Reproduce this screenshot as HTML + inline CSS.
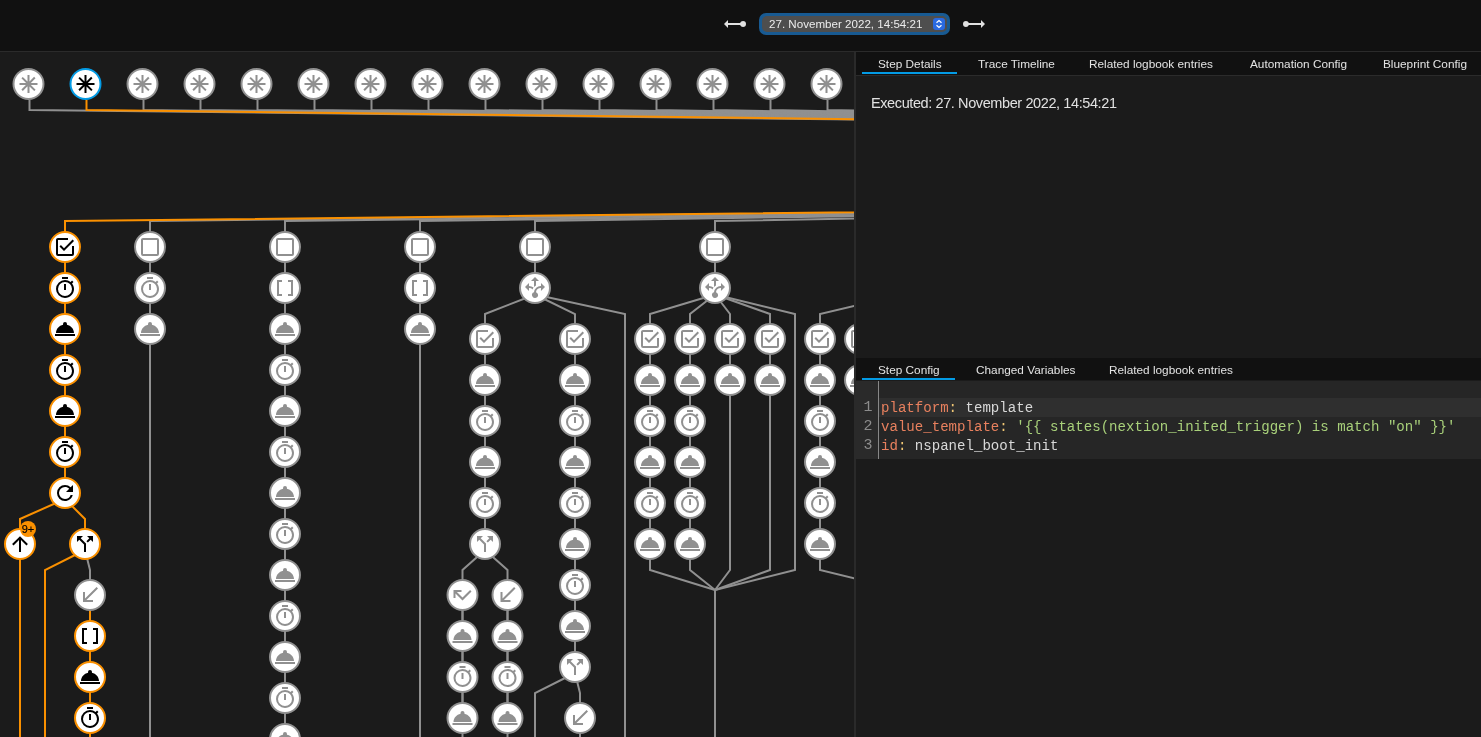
<!DOCTYPE html>
<html><head><meta charset="utf-8"><style>
html,body{margin:0;padding:0;}
.hdr,.panel,.graph{will-change:transform;}
body{width:1481px;height:737px;overflow:hidden;background:#1b1b1b;position:relative;font-family:"Liberation Sans",sans-serif;}
.hdr{position:absolute;left:0;top:0;width:1481px;height:51px;background:#111111;border-bottom:1px solid #2b2b2b;}
.graph{position:absolute;left:0;top:0;width:855px;height:737px;overflow:hidden;}
.graph svg path{fill:none;stroke-width:2;}
.graph svg path.i{stroke:none;}
.graph svg circle{fill:#fff;stroke-width:2;}
.panel{position:absolute;left:854px;top:52px;width:625px;height:685px;border-left:2px solid #2a2a2a;background:#1b1b1b;}
.tabs{position:absolute;left:0;width:626px;background:#111111;}
.tab{position:absolute;color:#e3e3e3;font-size:11.8px;letter-spacing:0px;white-space:nowrap;}
.ul{position:absolute;height:2px;background:#039be5;}
.exec{position:absolute;left:15px;top:43px;color:#e1e1e1;font-size:14.5px;letter-spacing:-0.4px;white-space:nowrap;}
.editor{position:absolute;left:0;top:329px;width:626px;height:78px;background:#262626;}
.gutter{position:absolute;left:0;top:0;width:22px;height:78px;background:#2a2a2a;border-right:1px solid #888;}
.code{position:absolute;font-family:"Liberation Mono",monospace;font-size:14.08px;line-height:19px;white-space:pre;}
.ln{position:absolute;left:0;width:16.5px;text-align:right;color:#8c8c8c;font-family:"Liberation Mono",monospace;font-size:15px;line-height:19px;}
.k{color:#e8805e} .p{color:#f0c674} .v{color:#d8d8d8} .s{color:#a8d07a}
</style></head><body>
<div class="graph"><svg width="855" height="737">
<path d="M29.5 100 L29.5 110 L1767 130" stroke="#909090"/>
<path d="M143.5 100 L143.5 110 L1767 130" stroke="#909090"/>
<path d="M200.5 100 L200.5 110 L1767 130" stroke="#909090"/>
<path d="M257.5 100 L257.5 110 L1767 130" stroke="#909090"/>
<path d="M314.5 100 L314.5 110 L1767 130" stroke="#909090"/>
<path d="M371.5 100 L371.5 110 L1767 130" stroke="#909090"/>
<path d="M428.5 100 L428.5 110 L1767 130" stroke="#909090"/>
<path d="M485.5 100 L485.5 110 L1767 130" stroke="#909090"/>
<path d="M542.5 100 L542.5 110 L1767 130" stroke="#909090"/>
<path d="M599.5 100 L599.5 110 L1767 130" stroke="#909090"/>
<path d="M656.5 100 L656.5 110 L1767 130" stroke="#909090"/>
<path d="M713.5 100 L713.5 110 L1767 130" stroke="#909090"/>
<path d="M770.5 100 L770.5 110 L1767 130" stroke="#909090"/>
<path d="M827.5 100 L827.5 110 L1767 130" stroke="#909090"/>
<path d="M884.5 100 L884.5 110 L1767 130" stroke="#909090"/>
<path d="M941.5 100 L941.5 110 L1767 130" stroke="#909090"/>
<path d="M1867 201 L150 221 L150 235" stroke="#909090"/>
<path d="M1867 201 L285 221 L285 235" stroke="#909090"/>
<path d="M1867 201 L420 221 L420 235" stroke="#909090"/>
<path d="M1867 201 L535 221 L535 235" stroke="#909090"/>
<path d="M1867 201 L715 221 L715 235" stroke="#909090"/>
<path d="M1867 201 L903 221 L903 235" stroke="#909090"/>
<path d="M85 550 L90 570 L90 595" stroke="#909090"/>
<path d="M150 247 L150 329" stroke="#909090"/>
<path d="M150 329 L150 800" stroke="#909090"/>
<path d="M285 247 L285 739" stroke="#909090"/>
<path d="M285 739 L285 800" stroke="#909090"/>
<path d="M420 247 L420 329" stroke="#909090"/>
<path d="M420 329 L420 800" stroke="#909090"/>
<path d="M535 247 L535 288" stroke="#909090"/>
<path d="M535 294.5 L485 314 L485 330" stroke="#909090"/>
<path d="M535 294.5 L575 314 L575 330" stroke="#909090"/>
<path d="M535 294.5 L625 314 L625 330" stroke="#909090"/>
<path d="M625 314 L625 800" stroke="#909090"/>
<path d="M485 339 L485 544" stroke="#909090"/>
<path d="M485 550 L462.5 570 L462.5 800" stroke="#909090"/>
<path d="M485 550 L507.5 570 L507.5 800" stroke="#909090"/>
<path d="M462.5 595 L462.5 718" stroke="#909090"/>
<path d="M507.5 595 L507.5 718" stroke="#909090"/>
<path d="M575 339 L575 667" stroke="#909090"/>
<path d="M575 673 L535 693 L535 800" stroke="#909090"/>
<path d="M575 673 L580 693 L580 800" stroke="#909090"/>
<path d="M715 247 L715 288" stroke="#909090"/>
<path d="M715 294.5 L650 314 L650 570 L715 590" stroke="#909090"/>
<path d="M715 294.5 L690 314 L690 570 L715 590" stroke="#909090"/>
<path d="M715 294.5 L730 314 L730 570 L715 590" stroke="#909090"/>
<path d="M715 294.5 L770 314 L770 570 L715 590" stroke="#909090"/>
<path d="M715 294.5 L795 314 L795 570 L715 590" stroke="#909090"/>
<path d="M715 590 L715 800" stroke="#909090"/>
<path d="M650 339 L650 544" stroke="#909090"/>
<path d="M690 339 L690 544" stroke="#909090"/>
<path d="M730 339 L730 380" stroke="#909090"/>
<path d="M770 339 L770 380" stroke="#909090"/>
<path d="M903 247 L903 288" stroke="#909090"/>
<path d="M903 294.5 L820 314 L820 570 L903 590" stroke="#909090"/>
<path d="M903 294.5 L860 314 L860 570 L903 590" stroke="#909090"/>
<path d="M820 339 L820 544" stroke="#909090"/>
<path d="M860 339 L860 380" stroke="#909090"/>
<path d="M86.5 100 L86.5 110 L1767 130" stroke="#fa9000"/>
<path d="M1867 201 L65 221 L65 235" stroke="#fa9000"/>
<path d="M65 247 L65 493" stroke="#fa9000"/>
<path d="M65 499 L20 519 L20 800" stroke="#fa9000"/>
<path d="M65 499 L85 519 L85 544" stroke="#fa9000"/>
<path d="M85 550 L45 570 L45 800" stroke="#fa9000"/>
<path d="M90 595 L90 800" stroke="#fa9000"/>
<circle cx="28.5" cy="84" r="15" stroke="#909090"/><path class="i" d="M21 13h-6.6l4.7 4.7-1.4 1.4-4.7-4.7V21h-2v-6.7L6.3 19l-1.4-1.4L9.4 13H3v-2h6.6L4.9 6.3l1.4-1.4L11 9.6V3h2v6.4l4.6-4.6L19 6.3 14.3 11H21z" style="fill:#909090" transform="translate(16.5 72)"/>
<circle cx="85.5" cy="84" r="15" stroke="#039be5"/><path class="i" d="M21 13h-6.6l4.7 4.7-1.4 1.4-4.7-4.7V21h-2v-6.7L6.3 19l-1.4-1.4L9.4 13H3v-2h6.6L4.9 6.3l1.4-1.4L11 9.6V3h2v6.4l4.6-4.6L19 6.3 14.3 11H21z" style="fill:#000" transform="translate(73.5 72)"/>
<circle cx="142.5" cy="84" r="15" stroke="#909090"/><path class="i" d="M21 13h-6.6l4.7 4.7-1.4 1.4-4.7-4.7V21h-2v-6.7L6.3 19l-1.4-1.4L9.4 13H3v-2h6.6L4.9 6.3l1.4-1.4L11 9.6V3h2v6.4l4.6-4.6L19 6.3 14.3 11H21z" style="fill:#909090" transform="translate(130.5 72)"/>
<circle cx="199.5" cy="84" r="15" stroke="#909090"/><path class="i" d="M21 13h-6.6l4.7 4.7-1.4 1.4-4.7-4.7V21h-2v-6.7L6.3 19l-1.4-1.4L9.4 13H3v-2h6.6L4.9 6.3l1.4-1.4L11 9.6V3h2v6.4l4.6-4.6L19 6.3 14.3 11H21z" style="fill:#909090" transform="translate(187.5 72)"/>
<circle cx="256.5" cy="84" r="15" stroke="#909090"/><path class="i" d="M21 13h-6.6l4.7 4.7-1.4 1.4-4.7-4.7V21h-2v-6.7L6.3 19l-1.4-1.4L9.4 13H3v-2h6.6L4.9 6.3l1.4-1.4L11 9.6V3h2v6.4l4.6-4.6L19 6.3 14.3 11H21z" style="fill:#909090" transform="translate(244.5 72)"/>
<circle cx="313.5" cy="84" r="15" stroke="#909090"/><path class="i" d="M21 13h-6.6l4.7 4.7-1.4 1.4-4.7-4.7V21h-2v-6.7L6.3 19l-1.4-1.4L9.4 13H3v-2h6.6L4.9 6.3l1.4-1.4L11 9.6V3h2v6.4l4.6-4.6L19 6.3 14.3 11H21z" style="fill:#909090" transform="translate(301.5 72)"/>
<circle cx="370.5" cy="84" r="15" stroke="#909090"/><path class="i" d="M21 13h-6.6l4.7 4.7-1.4 1.4-4.7-4.7V21h-2v-6.7L6.3 19l-1.4-1.4L9.4 13H3v-2h6.6L4.9 6.3l1.4-1.4L11 9.6V3h2v6.4l4.6-4.6L19 6.3 14.3 11H21z" style="fill:#909090" transform="translate(358.5 72)"/>
<circle cx="427.5" cy="84" r="15" stroke="#909090"/><path class="i" d="M21 13h-6.6l4.7 4.7-1.4 1.4-4.7-4.7V21h-2v-6.7L6.3 19l-1.4-1.4L9.4 13H3v-2h6.6L4.9 6.3l1.4-1.4L11 9.6V3h2v6.4l4.6-4.6L19 6.3 14.3 11H21z" style="fill:#909090" transform="translate(415.5 72)"/>
<circle cx="484.5" cy="84" r="15" stroke="#909090"/><path class="i" d="M21 13h-6.6l4.7 4.7-1.4 1.4-4.7-4.7V21h-2v-6.7L6.3 19l-1.4-1.4L9.4 13H3v-2h6.6L4.9 6.3l1.4-1.4L11 9.6V3h2v6.4l4.6-4.6L19 6.3 14.3 11H21z" style="fill:#909090" transform="translate(472.5 72)"/>
<circle cx="541.5" cy="84" r="15" stroke="#909090"/><path class="i" d="M21 13h-6.6l4.7 4.7-1.4 1.4-4.7-4.7V21h-2v-6.7L6.3 19l-1.4-1.4L9.4 13H3v-2h6.6L4.9 6.3l1.4-1.4L11 9.6V3h2v6.4l4.6-4.6L19 6.3 14.3 11H21z" style="fill:#909090" transform="translate(529.5 72)"/>
<circle cx="598.5" cy="84" r="15" stroke="#909090"/><path class="i" d="M21 13h-6.6l4.7 4.7-1.4 1.4-4.7-4.7V21h-2v-6.7L6.3 19l-1.4-1.4L9.4 13H3v-2h6.6L4.9 6.3l1.4-1.4L11 9.6V3h2v6.4l4.6-4.6L19 6.3 14.3 11H21z" style="fill:#909090" transform="translate(586.5 72)"/>
<circle cx="655.5" cy="84" r="15" stroke="#909090"/><path class="i" d="M21 13h-6.6l4.7 4.7-1.4 1.4-4.7-4.7V21h-2v-6.7L6.3 19l-1.4-1.4L9.4 13H3v-2h6.6L4.9 6.3l1.4-1.4L11 9.6V3h2v6.4l4.6-4.6L19 6.3 14.3 11H21z" style="fill:#909090" transform="translate(643.5 72)"/>
<circle cx="712.5" cy="84" r="15" stroke="#909090"/><path class="i" d="M21 13h-6.6l4.7 4.7-1.4 1.4-4.7-4.7V21h-2v-6.7L6.3 19l-1.4-1.4L9.4 13H3v-2h6.6L4.9 6.3l1.4-1.4L11 9.6V3h2v6.4l4.6-4.6L19 6.3 14.3 11H21z" style="fill:#909090" transform="translate(700.5 72)"/>
<circle cx="769.5" cy="84" r="15" stroke="#909090"/><path class="i" d="M21 13h-6.6l4.7 4.7-1.4 1.4-4.7-4.7V21h-2v-6.7L6.3 19l-1.4-1.4L9.4 13H3v-2h6.6L4.9 6.3l1.4-1.4L11 9.6V3h2v6.4l4.6-4.6L19 6.3 14.3 11H21z" style="fill:#909090" transform="translate(757.5 72)"/>
<circle cx="826.5" cy="84" r="15" stroke="#909090"/><path class="i" d="M21 13h-6.6l4.7 4.7-1.4 1.4-4.7-4.7V21h-2v-6.7L6.3 19l-1.4-1.4L9.4 13H3v-2h6.6L4.9 6.3l1.4-1.4L11 9.6V3h2v6.4l4.6-4.6L19 6.3 14.3 11H21z" style="fill:#909090" transform="translate(814.5 72)"/>
<circle cx="883.5" cy="84" r="15" stroke="#909090"/><path class="i" d="M21 13h-6.6l4.7 4.7-1.4 1.4-4.7-4.7V21h-2v-6.7L6.3 19l-1.4-1.4L9.4 13H3v-2h6.6L4.9 6.3l1.4-1.4L11 9.6V3h2v6.4l4.6-4.6L19 6.3 14.3 11H21z" style="fill:#909090" transform="translate(871.5 72)"/>
<circle cx="940.5" cy="84" r="15" stroke="#909090"/><path class="i" d="M21 13h-6.6l4.7 4.7-1.4 1.4-4.7-4.7V21h-2v-6.7L6.3 19l-1.4-1.4L9.4 13H3v-2h6.6L4.9 6.3l1.4-1.4L11 9.6V3h2v6.4l4.6-4.6L19 6.3 14.3 11H21z" style="fill:#909090" transform="translate(928.5 72)"/>
<circle cx="65" cy="247" r="15" stroke="#fa9000"/><path class="i" d="M19 19H5V5h10V3H5c-1.11 0-2 .89-2 2v14a2 2 0 0 0 2 2h14a2 2 0 0 0 2-2v-8h-2m-11.09-.92L6.5 11.5 11 16 21 6l-1.41-1.42L11 13.17z" style="fill:#000" transform="translate(53 235)"/>
<circle cx="65" cy="288" r="15" stroke="#fa9000"/><path class="i" d="M12 20a7 7 0 0 1-7-7 7 7 0 0 1 7-7 7 7 0 0 1 7 7 7 7 0 0 1-7 7m7.03-12.61 1.42-1.42c-.45-.51-.9-.97-1.41-1.41L17.62 6c-1.55-1.26-3.5-2-5.62-2a9 9 0 0 0-9 9 9 9 0 0 0 9 9c5 0 9-4.03 9-9 0-2.12-.74-4.07-1.97-5.61M11 14h2V8h-2m4-7H9v2h6z" style="fill:#000" transform="translate(53 276)"/>
<circle cx="65" cy="329" r="15" stroke="#fa9000"/><path class="i" d="M12 5a2 2 0 0 1 2 2q0 .36-.12.69C17.95 8.5 21 11.91 21 16H3c0-4.09 3.05-7.5 7.12-8.31Q10 7.36 10 7a2 2 0 0 1 2-2m10 14H2v-2h20z" style="fill:#000" transform="translate(53 317)"/>
<circle cx="65" cy="370" r="15" stroke="#fa9000"/><path class="i" d="M12 20a7 7 0 0 1-7-7 7 7 0 0 1 7-7 7 7 0 0 1 7 7 7 7 0 0 1-7 7m7.03-12.61 1.42-1.42c-.45-.51-.9-.97-1.41-1.41L17.62 6c-1.55-1.26-3.5-2-5.62-2a9 9 0 0 0-9 9 9 9 0 0 0 9 9c5 0 9-4.03 9-9 0-2.12-.74-4.07-1.97-5.61M11 14h2V8h-2m4-7H9v2h6z" style="fill:#000" transform="translate(53 358)"/>
<circle cx="65" cy="411" r="15" stroke="#fa9000"/><path class="i" d="M12 5a2 2 0 0 1 2 2q0 .36-.12.69C17.95 8.5 21 11.91 21 16H3c0-4.09 3.05-7.5 7.12-8.31Q10 7.36 10 7a2 2 0 0 1 2-2m10 14H2v-2h20z" style="fill:#000" transform="translate(53 399)"/>
<circle cx="65" cy="452" r="15" stroke="#fa9000"/><path class="i" d="M12 20a7 7 0 0 1-7-7 7 7 0 0 1 7-7 7 7 0 0 1 7 7 7 7 0 0 1-7 7m7.03-12.61 1.42-1.42c-.45-.51-.9-.97-1.41-1.41L17.62 6c-1.55-1.26-3.5-2-5.62-2a9 9 0 0 0-9 9 9 9 0 0 0 9 9c5 0 9-4.03 9-9 0-2.12-.74-4.07-1.97-5.61M11 14h2V8h-2m4-7H9v2h6z" style="fill:#000" transform="translate(53 440)"/>
<circle cx="65" cy="493" r="15" stroke="#fa9000"/><path class="i" d="M17.65 6.35A7.96 7.96 0 0 0 12 4a8 8 0 0 0-8 8 8 8 0 0 0 8 8c3.73 0 6.84-2.55 7.73-6h-2.08A5.99 5.99 0 0 1 12 18a6 6 0 0 1-6-6 6 6 0 0 1 6-6c1.66 0 3.14.69 4.22 1.78L13 11h7V4z" style="fill:#000" transform="translate(53 481)"/>
<circle cx="20" cy="544" r="15" stroke="#fa9000"/><path class="i" d="M13 20h-2V8l-5.5 5.5-1.42-1.42L12 4.16l7.92 7.92-1.42 1.42L13 8z" style="fill:#000" transform="translate(8 532)"/>
<circle cx="85" cy="544" r="15" stroke="#fa9000"/><path class="i" d="m14 4 2.29 2.29-2.88 2.88 1.42 1.42 2.88-2.88L20 10V4M10 4H4v6l2.29-2.29 4.71 4.7V20h2v-8.41l-5.29-5.3" style="fill:#000" transform="translate(73 532)"/>
<circle cx="90" cy="595" r="15" stroke="#909090"/><path class="i" d="M20 5.41 18.59 4 7 15.59V9H5v10h10v-2H8.41" style="fill:#909090" transform="translate(78 583)"/>
<circle cx="90" cy="636" r="15" stroke="#fa9000"/><path class="i" d="M15 4v2h3v12h-3v2h5V4M4 4v16h5v-2H6V6h3V4z" style="fill:#000" transform="translate(78 624)"/>
<circle cx="90" cy="677" r="15" stroke="#fa9000"/><path class="i" d="M12 5a2 2 0 0 1 2 2q0 .36-.12.69C17.95 8.5 21 11.91 21 16H3c0-4.09 3.05-7.5 7.12-8.31Q10 7.36 10 7a2 2 0 0 1 2-2m10 14H2v-2h20z" style="fill:#000" transform="translate(78 665)"/>
<circle cx="90" cy="718" r="15" stroke="#fa9000"/><path class="i" d="M12 20a7 7 0 0 1-7-7 7 7 0 0 1 7-7 7 7 0 0 1 7 7 7 7 0 0 1-7 7m7.03-12.61 1.42-1.42c-.45-.51-.9-.97-1.41-1.41L17.62 6c-1.55-1.26-3.5-2-5.62-2a9 9 0 0 0-9 9 9 9 0 0 0 9 9c5 0 9-4.03 9-9 0-2.12-.74-4.07-1.97-5.61M11 14h2V8h-2m4-7H9v2h6z" style="fill:#000" transform="translate(78 706)"/>
<circle cx="150" cy="247" r="15" stroke="#909090"/><path class="i" d="M19 3H5c-1.11 0-2 .89-2 2v14a2 2 0 0 0 2 2h14a2 2 0 0 0 2-2V5a2 2 0 0 0-2-2m0 2v14H5V5z" style="fill:#909090" transform="translate(138 235)"/>
<circle cx="150" cy="288" r="15" stroke="#909090"/><path class="i" d="M12 20a7 7 0 0 1-7-7 7 7 0 0 1 7-7 7 7 0 0 1 7 7 7 7 0 0 1-7 7m7.03-12.61 1.42-1.42c-.45-.51-.9-.97-1.41-1.41L17.62 6c-1.55-1.26-3.5-2-5.62-2a9 9 0 0 0-9 9 9 9 0 0 0 9 9c5 0 9-4.03 9-9 0-2.12-.74-4.07-1.97-5.61M11 14h2V8h-2m4-7H9v2h6z" style="fill:#909090" transform="translate(138 276)"/>
<circle cx="150" cy="329" r="15" stroke="#909090"/><path class="i" d="M12 5a2 2 0 0 1 2 2q0 .36-.12.69C17.95 8.5 21 11.91 21 16H3c0-4.09 3.05-7.5 7.12-8.31Q10 7.36 10 7a2 2 0 0 1 2-2m10 14H2v-2h20z" style="fill:#909090" transform="translate(138 317)"/>
<circle cx="285" cy="247" r="15" stroke="#909090"/><path class="i" d="M19 3H5c-1.11 0-2 .89-2 2v14a2 2 0 0 0 2 2h14a2 2 0 0 0 2-2V5a2 2 0 0 0-2-2m0 2v14H5V5z" style="fill:#909090" transform="translate(273 235)"/>
<circle cx="285" cy="288" r="15" stroke="#909090"/><path class="i" d="M15 4v2h3v12h-3v2h5V4M4 4v16h5v-2H6V6h3V4z" style="fill:#909090" transform="translate(273 276)"/>
<circle cx="285" cy="329" r="15" stroke="#909090"/><path class="i" d="M12 5a2 2 0 0 1 2 2q0 .36-.12.69C17.95 8.5 21 11.91 21 16H3c0-4.09 3.05-7.5 7.12-8.31Q10 7.36 10 7a2 2 0 0 1 2-2m10 14H2v-2h20z" style="fill:#909090" transform="translate(273 317)"/>
<circle cx="285" cy="370" r="15" stroke="#909090"/><path class="i" d="M12 20a7 7 0 0 1-7-7 7 7 0 0 1 7-7 7 7 0 0 1 7 7 7 7 0 0 1-7 7m7.03-12.61 1.42-1.42c-.45-.51-.9-.97-1.41-1.41L17.62 6c-1.55-1.26-3.5-2-5.62-2a9 9 0 0 0-9 9 9 9 0 0 0 9 9c5 0 9-4.03 9-9 0-2.12-.74-4.07-1.97-5.61M11 14h2V8h-2m4-7H9v2h6z" style="fill:#909090" transform="translate(273 358)"/>
<circle cx="285" cy="411" r="15" stroke="#909090"/><path class="i" d="M12 5a2 2 0 0 1 2 2q0 .36-.12.69C17.95 8.5 21 11.91 21 16H3c0-4.09 3.05-7.5 7.12-8.31Q10 7.36 10 7a2 2 0 0 1 2-2m10 14H2v-2h20z" style="fill:#909090" transform="translate(273 399)"/>
<circle cx="285" cy="452" r="15" stroke="#909090"/><path class="i" d="M12 20a7 7 0 0 1-7-7 7 7 0 0 1 7-7 7 7 0 0 1 7 7 7 7 0 0 1-7 7m7.03-12.61 1.42-1.42c-.45-.51-.9-.97-1.41-1.41L17.62 6c-1.55-1.26-3.5-2-5.62-2a9 9 0 0 0-9 9 9 9 0 0 0 9 9c5 0 9-4.03 9-9 0-2.12-.74-4.07-1.97-5.61M11 14h2V8h-2m4-7H9v2h6z" style="fill:#909090" transform="translate(273 440)"/>
<circle cx="285" cy="493" r="15" stroke="#909090"/><path class="i" d="M12 5a2 2 0 0 1 2 2q0 .36-.12.69C17.95 8.5 21 11.91 21 16H3c0-4.09 3.05-7.5 7.12-8.31Q10 7.36 10 7a2 2 0 0 1 2-2m10 14H2v-2h20z" style="fill:#909090" transform="translate(273 481)"/>
<circle cx="285" cy="534" r="15" stroke="#909090"/><path class="i" d="M12 20a7 7 0 0 1-7-7 7 7 0 0 1 7-7 7 7 0 0 1 7 7 7 7 0 0 1-7 7m7.03-12.61 1.42-1.42c-.45-.51-.9-.97-1.41-1.41L17.62 6c-1.55-1.26-3.5-2-5.62-2a9 9 0 0 0-9 9 9 9 0 0 0 9 9c5 0 9-4.03 9-9 0-2.12-.74-4.07-1.97-5.61M11 14h2V8h-2m4-7H9v2h6z" style="fill:#909090" transform="translate(273 522)"/>
<circle cx="285" cy="575" r="15" stroke="#909090"/><path class="i" d="M12 5a2 2 0 0 1 2 2q0 .36-.12.69C17.95 8.5 21 11.91 21 16H3c0-4.09 3.05-7.5 7.12-8.31Q10 7.36 10 7a2 2 0 0 1 2-2m10 14H2v-2h20z" style="fill:#909090" transform="translate(273 563)"/>
<circle cx="285" cy="616" r="15" stroke="#909090"/><path class="i" d="M12 20a7 7 0 0 1-7-7 7 7 0 0 1 7-7 7 7 0 0 1 7 7 7 7 0 0 1-7 7m7.03-12.61 1.42-1.42c-.45-.51-.9-.97-1.41-1.41L17.62 6c-1.55-1.26-3.5-2-5.62-2a9 9 0 0 0-9 9 9 9 0 0 0 9 9c5 0 9-4.03 9-9 0-2.12-.74-4.07-1.97-5.61M11 14h2V8h-2m4-7H9v2h6z" style="fill:#909090" transform="translate(273 604)"/>
<circle cx="285" cy="657" r="15" stroke="#909090"/><path class="i" d="M12 5a2 2 0 0 1 2 2q0 .36-.12.69C17.95 8.5 21 11.91 21 16H3c0-4.09 3.05-7.5 7.12-8.31Q10 7.36 10 7a2 2 0 0 1 2-2m10 14H2v-2h20z" style="fill:#909090" transform="translate(273 645)"/>
<circle cx="285" cy="698" r="15" stroke="#909090"/><path class="i" d="M12 20a7 7 0 0 1-7-7 7 7 0 0 1 7-7 7 7 0 0 1 7 7 7 7 0 0 1-7 7m7.03-12.61 1.42-1.42c-.45-.51-.9-.97-1.41-1.41L17.62 6c-1.55-1.26-3.5-2-5.62-2a9 9 0 0 0-9 9 9 9 0 0 0 9 9c5 0 9-4.03 9-9 0-2.12-.74-4.07-1.97-5.61M11 14h2V8h-2m4-7H9v2h6z" style="fill:#909090" transform="translate(273 686)"/>
<circle cx="285" cy="739" r="15" stroke="#909090"/><path class="i" d="M12 5a2 2 0 0 1 2 2q0 .36-.12.69C17.95 8.5 21 11.91 21 16H3c0-4.09 3.05-7.5 7.12-8.31Q10 7.36 10 7a2 2 0 0 1 2-2m10 14H2v-2h20z" style="fill:#909090" transform="translate(273 727)"/>
<circle cx="420" cy="247" r="15" stroke="#909090"/><path class="i" d="M19 3H5c-1.11 0-2 .89-2 2v14a2 2 0 0 0 2 2h14a2 2 0 0 0 2-2V5a2 2 0 0 0-2-2m0 2v14H5V5z" style="fill:#909090" transform="translate(408 235)"/>
<circle cx="420" cy="288" r="15" stroke="#909090"/><path class="i" d="M15 4v2h3v12h-3v2h5V4M4 4v16h5v-2H6V6h3V4z" style="fill:#909090" transform="translate(408 276)"/>
<circle cx="420" cy="329" r="15" stroke="#909090"/><path class="i" d="M12 5a2 2 0 0 1 2 2q0 .36-.12.69C17.95 8.5 21 11.91 21 16H3c0-4.09 3.05-7.5 7.12-8.31Q10 7.36 10 7a2 2 0 0 1 2-2m10 14H2v-2h20z" style="fill:#909090" transform="translate(408 317)"/>
<circle cx="535" cy="247" r="15" stroke="#909090"/><path class="i" d="M19 3H5c-1.11 0-2 .89-2 2v14a2 2 0 0 0 2 2h14a2 2 0 0 0 2-2V5a2 2 0 0 0-2-2m0 2v14H5V5z" style="fill:#909090" transform="translate(523 235)"/>
<circle cx="535" cy="288" r="15" stroke="#909090"/><path class="i" d="M11 5H8l4-4 4 4h-3v4.43c-.75.46-1.42 1.03-2 1.69zm11 6-4-4v3a6.747 6.747 0 0 0-7 6.17A3.006 3.006 0 0 0 9.17 20 3.006 3.006 0 0 0 13 21.83 3.01 3.01 0 0 0 14.83 18c-.3-.86-.98-1.53-1.83-1.83.47-4 4.47-4.2 4.95-4.2v3zm-11.37.59A7.63 7.63 0 0 0 6 10V7l-4 4 4 4v-3c1.34.03 2.63.5 3.64 1.4.25-.64.58-1.25.99-1.81" style="fill:#909090" transform="translate(523 276)"/>
<circle cx="485" cy="339" r="15" stroke="#909090"/><path class="i" d="M19 19H5V5h10V3H5c-1.11 0-2 .89-2 2v14a2 2 0 0 0 2 2h14a2 2 0 0 0 2-2v-8h-2m-11.09-.92L6.5 11.5 11 16 21 6l-1.41-1.42L11 13.17z" style="fill:#909090" transform="translate(473 327)"/>
<circle cx="485" cy="380" r="15" stroke="#909090"/><path class="i" d="M12 5a2 2 0 0 1 2 2q0 .36-.12.69C17.95 8.5 21 11.91 21 16H3c0-4.09 3.05-7.5 7.12-8.31Q10 7.36 10 7a2 2 0 0 1 2-2m10 14H2v-2h20z" style="fill:#909090" transform="translate(473 368)"/>
<circle cx="485" cy="421" r="15" stroke="#909090"/><path class="i" d="M12 20a7 7 0 0 1-7-7 7 7 0 0 1 7-7 7 7 0 0 1 7 7 7 7 0 0 1-7 7m7.03-12.61 1.42-1.42c-.45-.51-.9-.97-1.41-1.41L17.62 6c-1.55-1.26-3.5-2-5.62-2a9 9 0 0 0-9 9 9 9 0 0 0 9 9c5 0 9-4.03 9-9 0-2.12-.74-4.07-1.97-5.61M11 14h2V8h-2m4-7H9v2h6z" style="fill:#909090" transform="translate(473 409)"/>
<circle cx="485" cy="462" r="15" stroke="#909090"/><path class="i" d="M12 5a2 2 0 0 1 2 2q0 .36-.12.69C17.95 8.5 21 11.91 21 16H3c0-4.09 3.05-7.5 7.12-8.31Q10 7.36 10 7a2 2 0 0 1 2-2m10 14H2v-2h20z" style="fill:#909090" transform="translate(473 450)"/>
<circle cx="485" cy="503" r="15" stroke="#909090"/><path class="i" d="M12 20a7 7 0 0 1-7-7 7 7 0 0 1 7-7 7 7 0 0 1 7 7 7 7 0 0 1-7 7m7.03-12.61 1.42-1.42c-.45-.51-.9-.97-1.41-1.41L17.62 6c-1.55-1.26-3.5-2-5.62-2a9 9 0 0 0-9 9 9 9 0 0 0 9 9c5 0 9-4.03 9-9 0-2.12-.74-4.07-1.97-5.61M11 14h2V8h-2m4-7H9v2h6z" style="fill:#909090" transform="translate(473 491)"/>
<circle cx="485" cy="544" r="15" stroke="#909090"/><path class="i" d="m14 4 2.29 2.29-2.88 2.88 1.42 1.42 2.88-2.88L20 10V4M10 4H4v6l2.29-2.29 4.71 4.7V20h2v-8.41l-5.29-5.3" style="fill:#909090" transform="translate(473 532)"/>
<circle cx="462.5" cy="595" r="15" stroke="#909090"/><path class="i" d="M19.59 7 12 14.59 6.41 9H11V7H3v8h2v-4.59l7 7 9-9" style="fill:#909090" transform="translate(450.5 583)"/>
<circle cx="462.5" cy="636" r="15" stroke="#909090"/><path class="i" d="M12 5a2 2 0 0 1 2 2q0 .36-.12.69C17.95 8.5 21 11.91 21 16H3c0-4.09 3.05-7.5 7.12-8.31Q10 7.36 10 7a2 2 0 0 1 2-2m10 14H2v-2h20z" style="fill:#909090" transform="translate(450.5 624)"/>
<circle cx="462.5" cy="677" r="15" stroke="#909090"/><path class="i" d="M12 20a7 7 0 0 1-7-7 7 7 0 0 1 7-7 7 7 0 0 1 7 7 7 7 0 0 1-7 7m7.03-12.61 1.42-1.42c-.45-.51-.9-.97-1.41-1.41L17.62 6c-1.55-1.26-3.5-2-5.62-2a9 9 0 0 0-9 9 9 9 0 0 0 9 9c5 0 9-4.03 9-9 0-2.12-.74-4.07-1.97-5.61M11 14h2V8h-2m4-7H9v2h6z" style="fill:#909090" transform="translate(450.5 665)"/>
<circle cx="462.5" cy="718" r="15" stroke="#909090"/><path class="i" d="M12 5a2 2 0 0 1 2 2q0 .36-.12.69C17.95 8.5 21 11.91 21 16H3c0-4.09 3.05-7.5 7.12-8.31Q10 7.36 10 7a2 2 0 0 1 2-2m10 14H2v-2h20z" style="fill:#909090" transform="translate(450.5 706)"/>
<circle cx="507.5" cy="595" r="15" stroke="#909090"/><path class="i" d="M20 5.41 18.59 4 7 15.59V9H5v10h10v-2H8.41" style="fill:#909090" transform="translate(495.5 583)"/>
<circle cx="507.5" cy="636" r="15" stroke="#909090"/><path class="i" d="M12 5a2 2 0 0 1 2 2q0 .36-.12.69C17.95 8.5 21 11.91 21 16H3c0-4.09 3.05-7.5 7.12-8.31Q10 7.36 10 7a2 2 0 0 1 2-2m10 14H2v-2h20z" style="fill:#909090" transform="translate(495.5 624)"/>
<circle cx="507.5" cy="677" r="15" stroke="#909090"/><path class="i" d="M12 20a7 7 0 0 1-7-7 7 7 0 0 1 7-7 7 7 0 0 1 7 7 7 7 0 0 1-7 7m7.03-12.61 1.42-1.42c-.45-.51-.9-.97-1.41-1.41L17.62 6c-1.55-1.26-3.5-2-5.62-2a9 9 0 0 0-9 9 9 9 0 0 0 9 9c5 0 9-4.03 9-9 0-2.12-.74-4.07-1.97-5.61M11 14h2V8h-2m4-7H9v2h6z" style="fill:#909090" transform="translate(495.5 665)"/>
<circle cx="507.5" cy="718" r="15" stroke="#909090"/><path class="i" d="M12 5a2 2 0 0 1 2 2q0 .36-.12.69C17.95 8.5 21 11.91 21 16H3c0-4.09 3.05-7.5 7.12-8.31Q10 7.36 10 7a2 2 0 0 1 2-2m10 14H2v-2h20z" style="fill:#909090" transform="translate(495.5 706)"/>
<circle cx="575" cy="339" r="15" stroke="#909090"/><path class="i" d="M19 19H5V5h10V3H5c-1.11 0-2 .89-2 2v14a2 2 0 0 0 2 2h14a2 2 0 0 0 2-2v-8h-2m-11.09-.92L6.5 11.5 11 16 21 6l-1.41-1.42L11 13.17z" style="fill:#909090" transform="translate(563 327)"/>
<circle cx="575" cy="380" r="15" stroke="#909090"/><path class="i" d="M12 5a2 2 0 0 1 2 2q0 .36-.12.69C17.95 8.5 21 11.91 21 16H3c0-4.09 3.05-7.5 7.12-8.31Q10 7.36 10 7a2 2 0 0 1 2-2m10 14H2v-2h20z" style="fill:#909090" transform="translate(563 368)"/>
<circle cx="575" cy="421" r="15" stroke="#909090"/><path class="i" d="M12 20a7 7 0 0 1-7-7 7 7 0 0 1 7-7 7 7 0 0 1 7 7 7 7 0 0 1-7 7m7.03-12.61 1.42-1.42c-.45-.51-.9-.97-1.41-1.41L17.62 6c-1.55-1.26-3.5-2-5.62-2a9 9 0 0 0-9 9 9 9 0 0 0 9 9c5 0 9-4.03 9-9 0-2.12-.74-4.07-1.97-5.61M11 14h2V8h-2m4-7H9v2h6z" style="fill:#909090" transform="translate(563 409)"/>
<circle cx="575" cy="462" r="15" stroke="#909090"/><path class="i" d="M12 5a2 2 0 0 1 2 2q0 .36-.12.69C17.95 8.5 21 11.91 21 16H3c0-4.09 3.05-7.5 7.12-8.31Q10 7.36 10 7a2 2 0 0 1 2-2m10 14H2v-2h20z" style="fill:#909090" transform="translate(563 450)"/>
<circle cx="575" cy="503" r="15" stroke="#909090"/><path class="i" d="M12 20a7 7 0 0 1-7-7 7 7 0 0 1 7-7 7 7 0 0 1 7 7 7 7 0 0 1-7 7m7.03-12.61 1.42-1.42c-.45-.51-.9-.97-1.41-1.41L17.62 6c-1.55-1.26-3.5-2-5.62-2a9 9 0 0 0-9 9 9 9 0 0 0 9 9c5 0 9-4.03 9-9 0-2.12-.74-4.07-1.97-5.61M11 14h2V8h-2m4-7H9v2h6z" style="fill:#909090" transform="translate(563 491)"/>
<circle cx="575" cy="544" r="15" stroke="#909090"/><path class="i" d="M12 5a2 2 0 0 1 2 2q0 .36-.12.69C17.95 8.5 21 11.91 21 16H3c0-4.09 3.05-7.5 7.12-8.31Q10 7.36 10 7a2 2 0 0 1 2-2m10 14H2v-2h20z" style="fill:#909090" transform="translate(563 532)"/>
<circle cx="575" cy="585" r="15" stroke="#909090"/><path class="i" d="M12 20a7 7 0 0 1-7-7 7 7 0 0 1 7-7 7 7 0 0 1 7 7 7 7 0 0 1-7 7m7.03-12.61 1.42-1.42c-.45-.51-.9-.97-1.41-1.41L17.62 6c-1.55-1.26-3.5-2-5.62-2a9 9 0 0 0-9 9 9 9 0 0 0 9 9c5 0 9-4.03 9-9 0-2.12-.74-4.07-1.97-5.61M11 14h2V8h-2m4-7H9v2h6z" style="fill:#909090" transform="translate(563 573)"/>
<circle cx="575" cy="626" r="15" stroke="#909090"/><path class="i" d="M12 5a2 2 0 0 1 2 2q0 .36-.12.69C17.95 8.5 21 11.91 21 16H3c0-4.09 3.05-7.5 7.12-8.31Q10 7.36 10 7a2 2 0 0 1 2-2m10 14H2v-2h20z" style="fill:#909090" transform="translate(563 614)"/>
<circle cx="575" cy="667" r="15" stroke="#909090"/><path class="i" d="m14 4 2.29 2.29-2.88 2.88 1.42 1.42 2.88-2.88L20 10V4M10 4H4v6l2.29-2.29 4.71 4.7V20h2v-8.41l-5.29-5.3" style="fill:#909090" transform="translate(563 655)"/>
<circle cx="580" cy="718" r="15" stroke="#909090"/><path class="i" d="M20 5.41 18.59 4 7 15.59V9H5v10h10v-2H8.41" style="fill:#909090" transform="translate(568 706)"/>
<circle cx="715" cy="247" r="15" stroke="#909090"/><path class="i" d="M19 3H5c-1.11 0-2 .89-2 2v14a2 2 0 0 0 2 2h14a2 2 0 0 0 2-2V5a2 2 0 0 0-2-2m0 2v14H5V5z" style="fill:#909090" transform="translate(703 235)"/>
<circle cx="715" cy="288" r="15" stroke="#909090"/><path class="i" d="M11 5H8l4-4 4 4h-3v4.43c-.75.46-1.42 1.03-2 1.69zm11 6-4-4v3a6.747 6.747 0 0 0-7 6.17A3.006 3.006 0 0 0 9.17 20 3.006 3.006 0 0 0 13 21.83 3.01 3.01 0 0 0 14.83 18c-.3-.86-.98-1.53-1.83-1.83.47-4 4.47-4.2 4.95-4.2v3zm-11.37.59A7.63 7.63 0 0 0 6 10V7l-4 4 4 4v-3c1.34.03 2.63.5 3.64 1.4.25-.64.58-1.25.99-1.81" style="fill:#909090" transform="translate(703 276)"/>
<circle cx="650" cy="339" r="15" stroke="#909090"/><path class="i" d="M19 19H5V5h10V3H5c-1.11 0-2 .89-2 2v14a2 2 0 0 0 2 2h14a2 2 0 0 0 2-2v-8h-2m-11.09-.92L6.5 11.5 11 16 21 6l-1.41-1.42L11 13.17z" style="fill:#909090" transform="translate(638 327)"/>
<circle cx="650" cy="380" r="15" stroke="#909090"/><path class="i" d="M12 5a2 2 0 0 1 2 2q0 .36-.12.69C17.95 8.5 21 11.91 21 16H3c0-4.09 3.05-7.5 7.12-8.31Q10 7.36 10 7a2 2 0 0 1 2-2m10 14H2v-2h20z" style="fill:#909090" transform="translate(638 368)"/>
<circle cx="650" cy="421" r="15" stroke="#909090"/><path class="i" d="M12 20a7 7 0 0 1-7-7 7 7 0 0 1 7-7 7 7 0 0 1 7 7 7 7 0 0 1-7 7m7.03-12.61 1.42-1.42c-.45-.51-.9-.97-1.41-1.41L17.62 6c-1.55-1.26-3.5-2-5.62-2a9 9 0 0 0-9 9 9 9 0 0 0 9 9c5 0 9-4.03 9-9 0-2.12-.74-4.07-1.97-5.61M11 14h2V8h-2m4-7H9v2h6z" style="fill:#909090" transform="translate(638 409)"/>
<circle cx="650" cy="462" r="15" stroke="#909090"/><path class="i" d="M12 5a2 2 0 0 1 2 2q0 .36-.12.69C17.95 8.5 21 11.91 21 16H3c0-4.09 3.05-7.5 7.12-8.31Q10 7.36 10 7a2 2 0 0 1 2-2m10 14H2v-2h20z" style="fill:#909090" transform="translate(638 450)"/>
<circle cx="650" cy="503" r="15" stroke="#909090"/><path class="i" d="M12 20a7 7 0 0 1-7-7 7 7 0 0 1 7-7 7 7 0 0 1 7 7 7 7 0 0 1-7 7m7.03-12.61 1.42-1.42c-.45-.51-.9-.97-1.41-1.41L17.62 6c-1.55-1.26-3.5-2-5.62-2a9 9 0 0 0-9 9 9 9 0 0 0 9 9c5 0 9-4.03 9-9 0-2.12-.74-4.07-1.97-5.61M11 14h2V8h-2m4-7H9v2h6z" style="fill:#909090" transform="translate(638 491)"/>
<circle cx="650" cy="544" r="15" stroke="#909090"/><path class="i" d="M12 5a2 2 0 0 1 2 2q0 .36-.12.69C17.95 8.5 21 11.91 21 16H3c0-4.09 3.05-7.5 7.12-8.31Q10 7.36 10 7a2 2 0 0 1 2-2m10 14H2v-2h20z" style="fill:#909090" transform="translate(638 532)"/>
<circle cx="690" cy="339" r="15" stroke="#909090"/><path class="i" d="M19 19H5V5h10V3H5c-1.11 0-2 .89-2 2v14a2 2 0 0 0 2 2h14a2 2 0 0 0 2-2v-8h-2m-11.09-.92L6.5 11.5 11 16 21 6l-1.41-1.42L11 13.17z" style="fill:#909090" transform="translate(678 327)"/>
<circle cx="690" cy="380" r="15" stroke="#909090"/><path class="i" d="M12 5a2 2 0 0 1 2 2q0 .36-.12.69C17.95 8.5 21 11.91 21 16H3c0-4.09 3.05-7.5 7.12-8.31Q10 7.36 10 7a2 2 0 0 1 2-2m10 14H2v-2h20z" style="fill:#909090" transform="translate(678 368)"/>
<circle cx="690" cy="421" r="15" stroke="#909090"/><path class="i" d="M12 20a7 7 0 0 1-7-7 7 7 0 0 1 7-7 7 7 0 0 1 7 7 7 7 0 0 1-7 7m7.03-12.61 1.42-1.42c-.45-.51-.9-.97-1.41-1.41L17.62 6c-1.55-1.26-3.5-2-5.62-2a9 9 0 0 0-9 9 9 9 0 0 0 9 9c5 0 9-4.03 9-9 0-2.12-.74-4.07-1.97-5.61M11 14h2V8h-2m4-7H9v2h6z" style="fill:#909090" transform="translate(678 409)"/>
<circle cx="690" cy="462" r="15" stroke="#909090"/><path class="i" d="M12 5a2 2 0 0 1 2 2q0 .36-.12.69C17.95 8.5 21 11.91 21 16H3c0-4.09 3.05-7.5 7.12-8.31Q10 7.36 10 7a2 2 0 0 1 2-2m10 14H2v-2h20z" style="fill:#909090" transform="translate(678 450)"/>
<circle cx="690" cy="503" r="15" stroke="#909090"/><path class="i" d="M12 20a7 7 0 0 1-7-7 7 7 0 0 1 7-7 7 7 0 0 1 7 7 7 7 0 0 1-7 7m7.03-12.61 1.42-1.42c-.45-.51-.9-.97-1.41-1.41L17.62 6c-1.55-1.26-3.5-2-5.62-2a9 9 0 0 0-9 9 9 9 0 0 0 9 9c5 0 9-4.03 9-9 0-2.12-.74-4.07-1.97-5.61M11 14h2V8h-2m4-7H9v2h6z" style="fill:#909090" transform="translate(678 491)"/>
<circle cx="690" cy="544" r="15" stroke="#909090"/><path class="i" d="M12 5a2 2 0 0 1 2 2q0 .36-.12.69C17.95 8.5 21 11.91 21 16H3c0-4.09 3.05-7.5 7.12-8.31Q10 7.36 10 7a2 2 0 0 1 2-2m10 14H2v-2h20z" style="fill:#909090" transform="translate(678 532)"/>
<circle cx="730" cy="339" r="15" stroke="#909090"/><path class="i" d="M19 19H5V5h10V3H5c-1.11 0-2 .89-2 2v14a2 2 0 0 0 2 2h14a2 2 0 0 0 2-2v-8h-2m-11.09-.92L6.5 11.5 11 16 21 6l-1.41-1.42L11 13.17z" style="fill:#909090" transform="translate(718 327)"/>
<circle cx="730" cy="380" r="15" stroke="#909090"/><path class="i" d="M12 5a2 2 0 0 1 2 2q0 .36-.12.69C17.95 8.5 21 11.91 21 16H3c0-4.09 3.05-7.5 7.12-8.31Q10 7.36 10 7a2 2 0 0 1 2-2m10 14H2v-2h20z" style="fill:#909090" transform="translate(718 368)"/>
<circle cx="770" cy="339" r="15" stroke="#909090"/><path class="i" d="M19 19H5V5h10V3H5c-1.11 0-2 .89-2 2v14a2 2 0 0 0 2 2h14a2 2 0 0 0 2-2v-8h-2m-11.09-.92L6.5 11.5 11 16 21 6l-1.41-1.42L11 13.17z" style="fill:#909090" transform="translate(758 327)"/>
<circle cx="770" cy="380" r="15" stroke="#909090"/><path class="i" d="M12 5a2 2 0 0 1 2 2q0 .36-.12.69C17.95 8.5 21 11.91 21 16H3c0-4.09 3.05-7.5 7.12-8.31Q10 7.36 10 7a2 2 0 0 1 2-2m10 14H2v-2h20z" style="fill:#909090" transform="translate(758 368)"/>
<circle cx="903" cy="247" r="15" stroke="#909090"/><path class="i" d="M19 3H5c-1.11 0-2 .89-2 2v14a2 2 0 0 0 2 2h14a2 2 0 0 0 2-2V5a2 2 0 0 0-2-2m0 2v14H5V5z" style="fill:#909090" transform="translate(891 235)"/>
<circle cx="903" cy="288" r="15" stroke="#909090"/><path class="i" d="M11 5H8l4-4 4 4h-3v4.43c-.75.46-1.42 1.03-2 1.69zm11 6-4-4v3a6.747 6.747 0 0 0-7 6.17A3.006 3.006 0 0 0 9.17 20 3.006 3.006 0 0 0 13 21.83 3.01 3.01 0 0 0 14.83 18c-.3-.86-.98-1.53-1.83-1.83.47-4 4.47-4.2 4.95-4.2v3zm-11.37.59A7.63 7.63 0 0 0 6 10V7l-4 4 4 4v-3c1.34.03 2.63.5 3.64 1.4.25-.64.58-1.25.99-1.81" style="fill:#909090" transform="translate(891 276)"/>
<circle cx="820" cy="339" r="15" stroke="#909090"/><path class="i" d="M19 19H5V5h10V3H5c-1.11 0-2 .89-2 2v14a2 2 0 0 0 2 2h14a2 2 0 0 0 2-2v-8h-2m-11.09-.92L6.5 11.5 11 16 21 6l-1.41-1.42L11 13.17z" style="fill:#909090" transform="translate(808 327)"/>
<circle cx="820" cy="380" r="15" stroke="#909090"/><path class="i" d="M12 5a2 2 0 0 1 2 2q0 .36-.12.69C17.95 8.5 21 11.91 21 16H3c0-4.09 3.05-7.5 7.12-8.31Q10 7.36 10 7a2 2 0 0 1 2-2m10 14H2v-2h20z" style="fill:#909090" transform="translate(808 368)"/>
<circle cx="820" cy="421" r="15" stroke="#909090"/><path class="i" d="M12 20a7 7 0 0 1-7-7 7 7 0 0 1 7-7 7 7 0 0 1 7 7 7 7 0 0 1-7 7m7.03-12.61 1.42-1.42c-.45-.51-.9-.97-1.41-1.41L17.62 6c-1.55-1.26-3.5-2-5.62-2a9 9 0 0 0-9 9 9 9 0 0 0 9 9c5 0 9-4.03 9-9 0-2.12-.74-4.07-1.97-5.61M11 14h2V8h-2m4-7H9v2h6z" style="fill:#909090" transform="translate(808 409)"/>
<circle cx="820" cy="462" r="15" stroke="#909090"/><path class="i" d="M12 5a2 2 0 0 1 2 2q0 .36-.12.69C17.95 8.5 21 11.91 21 16H3c0-4.09 3.05-7.5 7.12-8.31Q10 7.36 10 7a2 2 0 0 1 2-2m10 14H2v-2h20z" style="fill:#909090" transform="translate(808 450)"/>
<circle cx="820" cy="503" r="15" stroke="#909090"/><path class="i" d="M12 20a7 7 0 0 1-7-7 7 7 0 0 1 7-7 7 7 0 0 1 7 7 7 7 0 0 1-7 7m7.03-12.61 1.42-1.42c-.45-.51-.9-.97-1.41-1.41L17.62 6c-1.55-1.26-3.5-2-5.62-2a9 9 0 0 0-9 9 9 9 0 0 0 9 9c5 0 9-4.03 9-9 0-2.12-.74-4.07-1.97-5.61M11 14h2V8h-2m4-7H9v2h6z" style="fill:#909090" transform="translate(808 491)"/>
<circle cx="820" cy="544" r="15" stroke="#909090"/><path class="i" d="M12 5a2 2 0 0 1 2 2q0 .36-.12.69C17.95 8.5 21 11.91 21 16H3c0-4.09 3.05-7.5 7.12-8.31Q10 7.36 10 7a2 2 0 0 1 2-2m10 14H2v-2h20z" style="fill:#909090" transform="translate(808 532)"/>
<circle cx="860" cy="339" r="15" stroke="#909090"/><path class="i" d="M19 19H5V5h10V3H5c-1.11 0-2 .89-2 2v14a2 2 0 0 0 2 2h14a2 2 0 0 0 2-2v-8h-2m-11.09-.92L6.5 11.5 11 16 21 6l-1.41-1.42L11 13.17z" style="fill:#909090" transform="translate(848 327)"/>
<circle cx="860" cy="380" r="15" stroke="#909090"/><path class="i" d="M12 5a2 2 0 0 1 2 2q0 .36-.12.69C17.95 8.5 21 11.91 21 16H3c0-4.09 3.05-7.5 7.12-8.31Q10 7.36 10 7a2 2 0 0 1 2-2m10 14H2v-2h20z" style="fill:#909090" transform="translate(848 368)"/>
<circle cx="28" cy="529" r="8" style="fill:#fa9000;stroke:none"/><text x="28" y="532.5" text-anchor="middle" font-size="11" style="fill:#000;stroke:#000;stroke-width:0.15" font-family="Liberation Sans">9+</text>
</svg></div>
<div class="hdr">
 <svg style="position:absolute;left:723px;top:12px" width="24" height="24" viewBox="0 0 24 24"><path d="m1 12 4 4v-3h12.17c.41 1.17 1.52 2 2.83 2a3 3 0 0 0 3-3 3 3 0 0 0-3-3c-1.31 0-2.42.83-2.83 2H5V8z" fill="#e1e1e1"/></svg>
 <div style="position:absolute;left:759px;top:13px;width:191px;height:22px;border-radius:7px;background:#185a92;"></div>
 <div style="position:absolute;left:762px;top:16px;width:185px;height:16px;border-radius:5px;background:#4e4e4e;"></div>
 <div style="position:absolute;left:769px;top:17px;color:#ececec;font-size:11.6px;line-height:14px;letter-spacing:0px;white-space:nowrap;">27. November 2022, 14:54:21</div>
 <div style="position:absolute;left:933px;top:18px;width:12px;height:12px;border-radius:3px;background:#2a6ae0;"></div>
 <svg style="position:absolute;left:933px;top:18px" width="12" height="12" viewBox="0 0 12 12"><path d="M3.5 4.8 L6 2.5 L8.5 4.8 M3.5 7.2 L6 9.5 L8.5 7.2" stroke="#fff" stroke-width="1.2" fill="none"/></svg>
 <svg style="position:absolute;left:962px;top:12px" width="24" height="24" viewBox="0 0 24 24"><path d="m23 12-4 4v-3H6.83A2.99 2.99 0 0 1 4 15a3 3 0 0 1-3-3 3 3 0 0 1 3-3c1.31 0 2.42.83 2.83 2H19V8z" fill="#e1e1e1"/></svg>
</div>
<div class="panel">
 <div class="tabs" style="top:0;height:23px;border-bottom:1px solid #2b2b2b;">
  <div class="tab" style="left:22px;top:5px;">Step Details</div>
  <div class="tab" style="left:122px;top:5px;">Trace Timeline</div>
  <div class="tab" style="left:233px;top:5px;">Related logbook entries</div>
  <div class="tab" style="left:394px;top:5px;">Automation Config</div>
  <div class="tab" style="left:527px;top:5px;">Blueprint Config</div>
  <div class="ul" style="left:6px;top:20px;width:95px;"></div>
 </div>
 <div class="exec">Executed: 27. November 2022, 14:54:21</div>
 <div class="tabs" style="top:306px;height:22px;">
  <div class="tab" style="left:22px;top:5px;">Step Config</div>
  <div class="tab" style="left:120px;top:5px;">Changed Variables</div>
  <div class="tab" style="left:253px;top:5px;">Related logbook entries</div>
  <div class="ul" style="left:6px;top:20px;width:93px;"></div>
 </div>
 <div class="editor">
  <div class="gutter"></div>
  <div style="position:absolute;left:23px;top:17px;width:603px;height:19px;background:#2f2f2f;"></div>
  <div class="ln" style="top:17px;">1</div>
  <div class="ln" style="top:36px;">2</div>
  <div class="ln" style="top:55px;">3</div>
  <div class="code" style="left:25px;top:17.5px;"><span class="k">platform</span><span class="p">:</span><span class="v"> template</span>
<span class="k">value_template</span><span class="p">:</span><span class="s"> '{{ states(nextion_inited_trigger) is match "on" }}'</span>
<span class="k">id</span><span class="p">:</span><span class="v"> nspanel_boot_init</span></div>
 </div>
</div>
</body></html>
